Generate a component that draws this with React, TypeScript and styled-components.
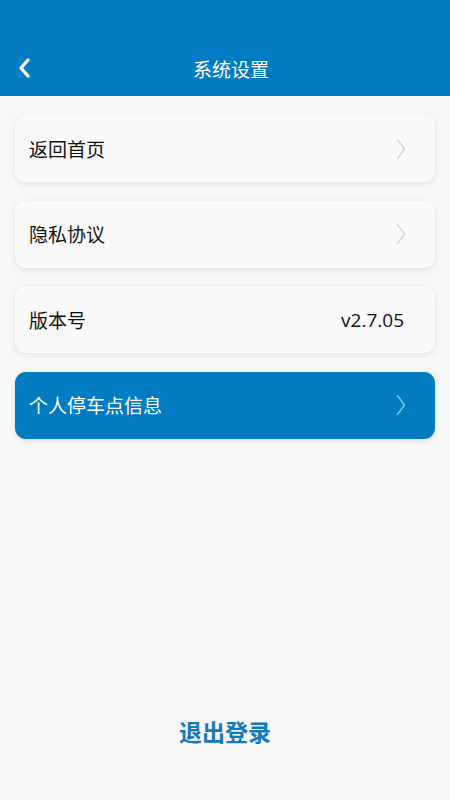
import React from "react";
import styled, { createGlobalStyle } from "styled-components";

const GlobalStyle = createGlobalStyle`
  html, body {
    margin: 0;
    padding: 0;
    background: #f8f8f8;
    font-family: "Noto Sans", "Noto Sans CJK SC", sans-serif;
  }
`;

const Page = styled.div`
  min-height: 800px;
  display: flex;
  flex-direction: column;
`;

const Header = styled.div`
  height: 96px;
  background: #017cc2;
  display: flex;
  align-items: flex-end;
  justify-content: center;
  position: relative;
  box-sizing: border-box;
  padding: 0 0 14px 12px;
`;

const BackButton = styled.div`
  position: absolute;
  left: 14px;
  bottom: 16px;
  width: 20px;
  height: 24px;
  display: flex;
  align-items: center;
  justify-content: center;
`;

const Title = styled.div`
  color: #fff;
  font-size: 19px;
  line-height: 24px;
`;

const List = styled.div`
  display: flex;
  flex-direction: column;
  gap: 18.5px;
  padding: 19px 15px 0;
`;

const Card = styled.div<{ active?: boolean }>`
  height: 67px;
  border-radius: 11px;
  background: ${(p) => (p.active ? "#017cc2" : "#fafafa")};
  box-shadow: 0 2px 6px rgba(0, 0, 0, 0.1);
  display: flex;
  align-items: center;
  justify-content: space-between;
  padding: 0 29px 0 14px;
  box-sizing: border-box;
  color: ${(p) => (p.active ? "#fff" : "#111")};
`;

const Label = styled.span`
  font-size: 19px;
`;

const Value = styled.span`
  font-size: 19px;
  font-family: "Open Sans", "Noto Sans", sans-serif;
  margin-right: 2px;
  color: #111;
`;

const Logout = styled.div`
  margin-top: auto;
  margin-bottom: 52px;
  text-align: center;
  color: #127ac0;
  font-size: 23px;
  font-weight: 700;
`;

const Chevron: React.FC<{ color: string }> = ({ color }) => (
  <svg width="10" height="22" viewBox="0 0 10 22">
    <path d="M1.5 1.5 L8.5 11 L1.5 20.5" fill="none" stroke={color} strokeWidth="1.4" strokeLinecap="round" strokeLinejoin="round" />
  </svg>
);

const items = [
  { label: "返回首页", chevron: true },
  { label: "隐私协议", chevron: true },
  { label: "版本号", value: "v2.7.05" },
  { label: "个人停车点信息", chevron: true, active: true },
];

const App: React.FC = () => {
  return (
    <Page>
      <GlobalStyle />
      <Header>
        <BackButton>
          <svg width="14" height="22" viewBox="0 0 14 22">
            <path d="M11 3 L4 11 L11 19" fill="none" stroke="#fff" strokeWidth="3.4" strokeLinecap="round" strokeLinejoin="round" />
          </svg>
        </BackButton>
        <Title>系统设置</Title>
      </Header>
      <List>
        {items.map((item) => (
          <Card key={item.label} active={item.active}>
            <Label>{item.label}</Label>
            {item.value && <Value>{item.value}</Value>}
            {item.chevron && (
              <Chevron color={item.active ? "rgba(255,255,255,0.55)" : "#d6d6d6"} />
            )}
          </Card>
        ))}
      </List>
      <Logout>退出登录</Logout>
    </Page>
  );
};

export default App;
